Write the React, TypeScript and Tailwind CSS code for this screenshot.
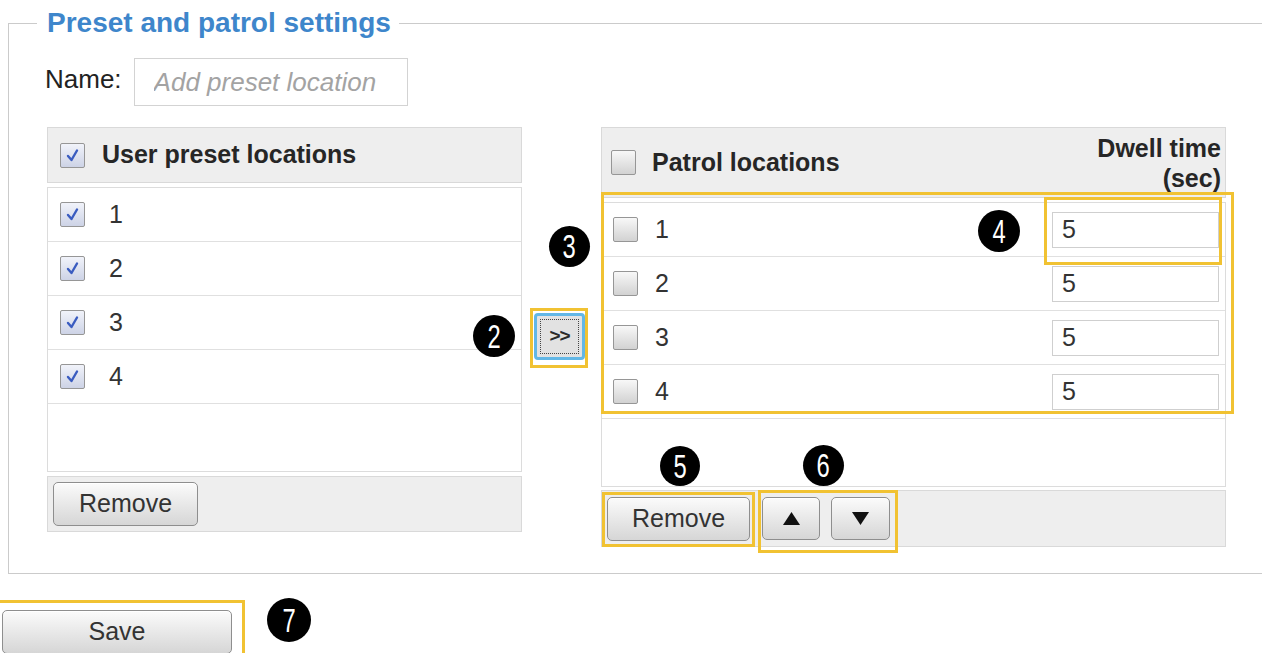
import React from "react";

function Box({ checked }: { checked?: boolean }) {
  return (
    <div
      className={
        "w-[25px] h-[25px] shrink-0 border border-[#969696] rounded-[2px] flex items-center justify-center bg-linear-to-b " +
        (checked ? "from-[#f1f3fa] to-[#cdd3e6]" : "from-[#f8f8f8] to-[#d2d2d2]")
      }
    >
      {checked ? (
        <svg width="17" height="17" viewBox="0 0 17 17">
          <path d="M4 9 L7.5 13 L13 3.5" fill="none" stroke="#3a5cc0" strokeWidth="2.4" strokeLinecap="round" strokeLinejoin="round" />
        </svg>
      ) : null}
    </div>
  );
}

const btn =
  "bg-linear-to-b from-[#fbfbfb] to-[#d6d6d6] border border-[#8e8e8e] rounded-[5px] text-[#333] shadow-[inset_0_1px_0_#ffffff] flex items-center justify-center";

function Num({ n, x, y, d }: { n: string; x: number; y: number; d: number }) {
  return (
    <div
      className="absolute rounded-full bg-black text-white flex items-center justify-center"
      style={{ left: x - d / 2, top: y - d / 2, width: d, height: d }}
    >
      <span className="text-[33px] leading-none scale-x-[0.72] font-['Liberation_Sans',Arial,sans-serif]">{n}</span>
    </div>
  );
}

function Hl({ l, t, w, h }: { l: number; t: number; w: number; h: number }) {
  return (
    <div
      className="absolute border-[3px] border-[#f1c232] pointer-events-none"
      style={{ left: l, top: t, width: w, height: h }}
    />
  );
}

export default function App() {
  const rows = ["1", "2", "3", "4"];
  return (
    <div className="relative w-[1262px] h-[653px] overflow-hidden bg-white font-['Liberation_Sans',Arial,sans-serif] text-[#262626]">
      <fieldset className="ml-[8px] mt-[9px] w-[1262px] h-[565px] border border-[#cbcbcb]">
        <legend className="ml-[28px] pl-[10px] pr-[8px] text-[28px] leading-[28px] font-bold text-[#3e86cb]">
          Preset and patrol settings
        </legend>
        <div className="pl-[36px] pt-[21px]">
          <div className="flex items-start">
            <span className="mt-[8px] text-[26px] leading-[26px] text-[#222]">Name:</span>
            <input
              className="ml-[12px] w-[274px] h-[48px] border border-[#d3d3d3] pl-[19px] text-[26px] italic text-[#333] placeholder:text-[#a3a3a3] outline-none"
              placeholder="Add preset location"
            />
          </div>

          <div className="ml-[2px] mt-[21px] flex items-start">
            {/* Left panel */}
            <div className="w-[475px]">
              <div className="h-[56px] bg-[#eeeeee] border border-[#d9d9d9] flex items-center pl-[12px]">
                <Box checked />
                <span className="ml-[17px] text-[25px] font-bold text-[#262626]">User preset locations</span>
              </div>
              <div className="mt-[4px] h-[285px] border border-[#dcdcdc]">
                {rows.map((n) => (
                  <div key={n} className="h-[54px] border-b border-[#e0e0e0] flex items-center pl-[12px]">
                    <Box checked />
                    <span className="ml-[24px] text-[25px] text-[#333]">{n}</span>
                  </div>
                ))}
              </div>
              <div className="mt-[4px] h-[56px] bg-[#eeeeee] border border-[#d9d9d9] flex items-center pl-[5px]">
                <button className={btn + " w-[145px] h-[44px] text-[25px]"}>Remove</button>
              </div>
            </div>

            {/* Middle */}
            <div className="w-[79px] pl-[12px] pt-[186px]">
              <button className="w-[51px] h-[47px] rounded-[4px] border-[3px] border-[#62b7e6] bg-[#e2e2e2] p-[3px]">
                <div className="w-full h-full border border-dotted border-[#444] flex items-center justify-center text-[19px] font-bold text-[#2a2a2a] tracking-[-1px]">
                  &gt;&gt;
                </div>
              </button>
            </div>

            {/* Right panel */}
            <div className="w-[625px]">
              <div className="h-[71px] bg-[#eeeeee] border border-[#d9d9d9] flex items-center pl-[9px] pr-[4px]">
                <Box />
                <span className="ml-[16px] text-[25px] font-bold text-[#262626]">Patrol locations</span>
                <div className="ml-auto text-right text-[25px] leading-[30px] font-bold text-[#262626]">
                  <div>Dwell time</div>
                  <div>(sec)</div>
                </div>
              </div>
              <div className="mt-[4px] h-[285px] border border-[#dcdcdc]">
                {rows.map((n) => (
                  <div key={n} className="h-[54px] border-b border-[#e0e0e0] flex items-center pl-[11px] pr-[6px]">
                    <Box />
                    <span className="ml-[17px] text-[25px] text-[#333]">{n}</span>
                    <input
                      className="ml-auto w-[167px] h-[36px] border border-[#cfcfcf] pl-[9px] text-[25px] text-[#333] outline-none"
                      defaultValue="5"
                    />
                  </div>
                ))}
              </div>
              <div className="mt-[3px] h-[57px] bg-[#eeeeee] border border-[#d9d9d9] flex items-center pl-[5px]">
                <button className={btn + " w-[143px] h-[44px] text-[25px]"}>Remove</button>
                <button className={btn + " ml-[12px] w-[58px] h-[43px]"}>
                  <svg width="17" height="13" viewBox="0 0 17 13">
                    <polygon points="8.5,0 17,13 0,13" fill="#111" />
                  </svg>
                </button>
                <button className={btn + " ml-[11px] w-[59px] h-[43px]"}>
                  <svg width="17" height="13" viewBox="0 0 17 13">
                    <polygon points="0,0 17,0 8.5,13" fill="#111" />
                  </svg>
                </button>
              </div>
            </div>
          </div>
        </div>
      </fieldset>

      <button className={btn + " ml-[2px] mt-[36px] w-[230px] h-[44px] text-[25px]"}>Save</button>

      {/* Annotation highlights */}
      <Hl l={530} t={308} w={58} h={60} />
      <Hl l={601} t={192} w={633} h={222} />
      <Hl l={1044} t={197} w={178} h={68} />
      <Hl l={602} t={492} w={153} h={55} />
      <Hl l={758} t={490} w={140} h={63} />
      <Hl l={-3} t={600} w={248} h={70} />

      {/* Callout numbers */}
      <Num n="2" x={494} y={336} d={42} />
      <Num n="3" x={569} y={246} d={41} />
      <Num n="4" x={999} y={231} d={42} />
      <Num n="5" x={680} y={466} d={40} />
      <Num n="6" x={823} y={465} d={41} />
      <Num n="7" x={289} y={620} d={44} />
    </div>
  );
}
